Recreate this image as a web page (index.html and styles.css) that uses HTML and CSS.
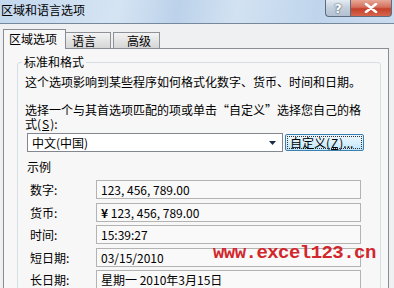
FILE: index.html
```html
<!DOCTYPE html>
<html lang="zh-CN">
<head>
    <meta charset="UTF-8">
    <title>区域和语言选项</title>
    <link rel="stylesheet" href="styles.css">
</head>
<body>

    <div class="window">
        <div class="titlebar">
            <span class="title">区域和语言选项</span>
            <div class="caption">
                <span class="cap-help">?</span>
                <span class="cap-close">
                    <svg width="14" height="10" viewBox="0 0 14 10">
                        <path d="M2 1 L12 9 M12 1 L2 9" stroke="#fff" stroke-width="2.6" stroke-linecap="round"/>
                    </svg>
                </span>
            </div>
        </div>

        <div class="client">
            <div class="tabs">
                <div class="tab active">区域选项</div>
                <div class="tab">语言</div>
                <div class="tab">高级</div>
            </div>

            <div class="panel">
                <fieldset class="group">
                    <legend>标准和格式</legend>
                    <p class="desc">这个选项影响到某些程序如何格式化数字、货币、时间和日期。</p>
                    <p class="prompt">选择一个与其首选项匹配的项或单击“自定义”选择您自己的格式(<span class="key">S</span>):</p>

                    <div class="picker">
                        <div class="select">
                            <span>中文(中国)</span>
                            <svg class="arrow" width="7" height="4" viewBox="0 0 7 4"><path d="M0 0 H7 L3.5 4 Z" fill="#1b2a4a"/></svg>
                        </div>
                        <button class="custom"><span>自定义(<span class="key">Z</span>)...</span></button>
                    </div>

                    <div class="sample-title">示例</div>
                    <div class="samples">
                        <span class="label">数字:</span>
                        <span class="value">123, 456, 789.00</span>
                        <span class="label">货币:</span>
                        <span class="value"><b>¥</b> 123, 456, 789.00</span>
                        <span class="label">时间:</span>
                        <span class="value">15:39:27</span>
                        <span class="label">短日期:</span>
                        <span class="value">03/15/2010</span>
                        <span class="label">长日期:</span>
                        <span class="value">星期一 2010年3月15日</span>
                    </div>
                </fieldset>
            </div>
        </div>

        <div class="watermark">www.excel123.cn</div>
    </div>

</body>
</html>
```

FILE: styles.css
```css
* {
    box-sizing: border-box;
}
html, body {
    margin: 0;
    padding: 0;
}
body {
    width: 394px;
    height: 288px;
    overflow: hidden;
    font-family: "Noto Sans CJK SC", "Noto Sans", sans-serif;
    font-size: 12px;
    color: #000;
    background: #eef0f2;
}
.window {
    position: relative;
    width: 394px;
    height: 288px;
    overflow: hidden;
}
.titlebar {
    display: flex;
    align-items: flex-start;
    height: 24px;
    border-bottom: 1px solid #76889c;
    background: linear-gradient(100deg, #c3d8ee 0%, #d5e4f3 30%, #bcd2ea 45%, #d2e2f2 60%, #c0d5ec 80%, #cadcef 100%);
}
.title {
    padding: 2px 0 0 1px;
    line-height: 16px;
    color: #000;
}
.caption {
    display: flex;
    margin-left: auto;
    margin-right: 2px;
}
.cap-help, .cap-close {
    display: flex;
    align-items: center;
    justify-content: center;
    height: 17px;
    border: 1px solid #5d6c7e;
    border-top: none;
}
.cap-help {
    width: 25px;
    border-radius: 0 0 0 4px;
    border-right: none;
    background: linear-gradient(#e4ebf3, #c2cedb 50%, #b2c1d1);
    color: #fff;
    font-family: "DejaVu Sans", sans-serif;
    font-weight: bold;
    font-size: 13px;
    text-shadow: 0 0 2px #4b5a6c, 0 0 1px #4b5a6c;
}
.cap-close {
    width: 42px;
    border-radius: 0 0 4px 0;
    background: linear-gradient(#e8a898, #d46f5c 45%, #c4412b 55%, #d8654d);
}
.client {
    padding: 5px 0 0 3px;
}
.tabs {
    display: flex;
    align-items: flex-end;
    height: 19px;
}
.tab {
    position: relative;
    height: 16px;
    padding: 0 0 0 6px;
    border: 1px solid #8e9297;
    border-bottom: none;
    line-height: 15px;
    background: linear-gradient(#f3f3f3, #e4e4e4 50%, #d6d6d6);
}
.tab + .tab {
    border-left: none;
}
.tab:nth-child(2) {
    width: 45px;
}
.tab:nth-child(3) {
    width: 47px;
    margin-left: 2px;
    border-left: 1px solid #8e9297;
    padding-left: 13px;
}
.tab.active {
    z-index: 1;
    width: 63px;
    height: 20px;
    margin-bottom: -1px;
    padding-left: 5px;
    line-height: 17px;
    background: #f7f7f7;
    border-color: #898c95;
}
.panel {
    width: 386px;
    height: 260px;
    padding: 6px 0 0 13px;
    border: 1px solid #898c95;
    background: #f7f7f7;
}
.group {
    width: 364px;
    margin: 0;
    padding: 6px 0 0 7px;
    border: 1px solid #d5dfe5;
    border-radius: 3px;
}
.group legend {
    margin-left: -3px;
    padding: 0 2px;
    line-height: 14px;
}
.desc {
    margin: 0;
    line-height: 14px;
    white-space: nowrap;
}
.prompt {
    width: 336px;
    margin: 14px 0 0;
    line-height: 14px;
}
.key {
    padding: 0 1px;
    text-decoration: underline;
}
.picker {
    display: flex;
    align-items: center;
    margin: 2px 0 0 2px;
}
.select {
    display: flex;
    align-items: center;
    width: 256px;
    height: 19px;
    padding: 0 6px 0 4px;
    border: 1px solid #828790;
    background: #fff;
}
.arrow {
    margin-left: auto;
}
.custom {
    width: 79px;
    height: 17px;
    margin-left: 2px;
    padding: 1px;
    border: 1px solid #3c7fb1;
    border-radius: 2px;
    background: linear-gradient(#eaf6fd, #d9f0fc 50%, #bee6fd);
    font: inherit;
    color: #000;
}
.custom > span {
    display: block;
    height: 13px;
    line-height: 12px;
    border: 1px dotted #333;
    text-align: left;
    padding-left: 2px;
}
.sample-title {
    margin: 8px 0 0 2px;
    line-height: 14px;
}
.samples {
    display: grid;
    grid-template-columns: 66px 265px;
    grid-auto-rows: 19px;
    row-gap: 3.5px;
    margin: 6px 0 0 5px;
    align-items: center;
}
.value {
    height: 19px;
    padding: 0 4px;
    border: 1px solid #b3b3b3;
    line-height: 17px;
    background: #f9f9f9;
    white-space: nowrap;
}
.watermark {
    position: absolute;
    left: 213px;
    top: 242px;
    font-family: "Liberation Mono", monospace;
    font-weight: bold;
    font-size: 19px;
    letter-spacing: -0.55px;
    color: #d2262c;
}
```
